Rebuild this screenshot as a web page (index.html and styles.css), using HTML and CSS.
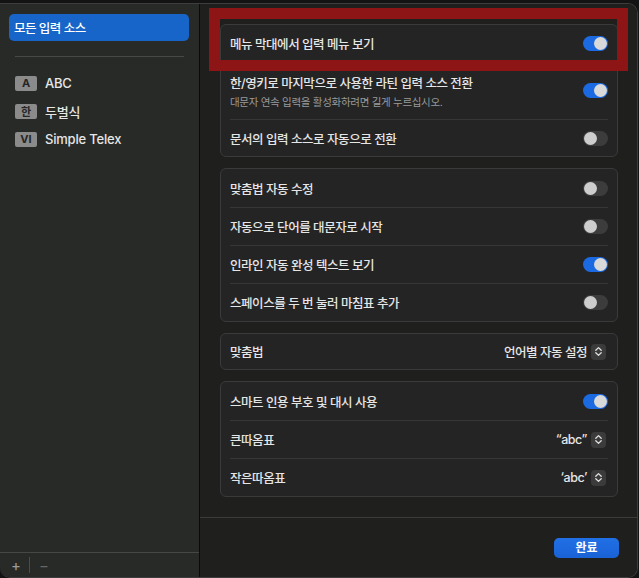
FILE: index.html
```html
<!DOCTYPE html>
<html lang="ko">
  <head>
    <meta charset="utf-8">
    <title>입력 소스</title>
    <link rel="stylesheet" href="styles.css">
  </head>
  <body>
    <div class="window">
      <div class="sidebar">
        <div class="source-list">
          <div class="source selected">모든 입력 소스</div>
          <div class="divider"></div>
          <div class="source"><span class="badge">A</span>ABC</div>
          <div class="source"><span class="badge">한</span>두벌식</div>
          <div class="source"><span class="badge">VI</span>Simple Telex</div>
        </div>
        <div class="list-tools">
          <span class="tool">+</span>
          <span class="tool-sep"></span>
          <span class="tool dim">−</span>
        </div>
      </div>

      <div class="pane">
        <div class="settings">
          <div class="group">
            <div class="row first">
              <span class="label">메뉴 막대에서 입력 메뉴 보기</span>
              <span class="switch on"></span>
            </div>
            <div class="row tall">
              <div>
                <div class="label">한/영키로 마지막으로 사용한 라틴 입력 소스 전환</div>
                <div class="hint">대문자 연속 입력을 활성화하려면 길게 누르십시오.</div>
              </div>
              <span class="switch on"></span>
            </div>
            <div class="row last">
              <span class="label">문서의 입력 소스로 자동으로 전환</span>
              <span class="switch"></span>
            </div>
          </div>

          <div class="group">
            <div class="row">
              <span class="label">맞춤법 자동 수정</span>
              <span class="switch"></span>
            </div>
            <div class="row">
              <span class="label">자동으로 단어를 대문자로 시작</span>
              <span class="switch"></span>
            </div>
            <div class="row">
              <span class="label">인라인 자동 완성 텍스트 보기</span>
              <span class="switch on"></span>
            </div>
            <div class="row">
              <span class="label">스페이스를 두 번 눌러 마침표 추가</span>
              <span class="switch"></span>
            </div>
          </div>

          <div class="group">
            <div class="row single">
              <span class="label">맞춤법</span>
              <span class="popup">언어별 자동 설정<span class="stepper"><svg width="15" height="15" viewBox="0 0 15 15"><path d="M4.8 6.2 L7.5 3.6 L10.2 6.2 M4.8 8.8 L7.5 11.4 L10.2 8.8" fill="none" stroke="#e2e2e2" stroke-width="1.3" stroke-linecap="round" stroke-linejoin="round"/></svg></span></span>
            </div>
          </div>

          <div class="group">
            <div class="row">
              <span class="label">스마트 인용 부호 및 대시 사용</span>
              <span class="switch on"></span>
            </div>
            <div class="row">
              <span class="label">큰따옴표</span>
              <span class="popup">“abc”<span class="stepper"><svg width="15" height="15" viewBox="0 0 15 15"><path d="M4.8 6.2 L7.5 3.6 L10.2 6.2 M4.8 8.8 L7.5 11.4 L10.2 8.8" fill="none" stroke="#e2e2e2" stroke-width="1.3" stroke-linecap="round" stroke-linejoin="round"/></svg></span></span>
            </div>
            <div class="row">
              <span class="label">작은따옴표</span>
              <span class="popup">‘abc’<span class="stepper"><svg width="15" height="15" viewBox="0 0 15 15"><path d="M4.8 6.2 L7.5 3.6 L10.2 6.2 M4.8 8.8 L7.5 11.4 L10.2 8.8" fill="none" stroke="#e2e2e2" stroke-width="1.3" stroke-linecap="round" stroke-linejoin="round"/></svg></span></span>
            </div>
          </div>
        </div>

        <div class="footer">
          <span class="done">완료</span>
        </div>

        <!-- 강조 표시 -->
        <div class="highlight"></div>
      </div>
    </div>
  </body>
</html>
```

FILE: styles.css
```css
* {
  box-sizing: border-box;
}

body {
  margin: 0;
  background-color: #131313;
  font-family: "Inter", "Noto Sans CJK KR", sans-serif;
  color: #e6e6e6;
  -webkit-user-select: none;
  user-select: none;
}

.window {
  display: flex;
  width: 638px;
  height: 575px;
  margin-top: 3px;
  border: 1px solid #3d3d3d;
  border-left: none;
  border-radius: 0 10px 10px 10px;
  overflow: hidden;
}

/* sidebar */
.sidebar {
  display: flex;
  flex-direction: column;
  width: 200px;
  background-color: #282a28;
  border-right: 1px solid #0b0b0b;
}
.source-list {
  flex: 1;
  padding: 10px 10px 0 9px;
}
.source {
  display: flex;
  align-items: center;
  height: 28px;
  padding-left: 6px;
  font-size: 13px;
  font-weight: 500;
  letter-spacing: -0.2px;
}
.source.selected {
  height: 27px;
  padding-left: 5px;
  background-color: #1765c9;
  border-radius: 5px;
  color: #fff;
  font-size: 12.5px;
  letter-spacing: -0.5px;
}
.divider {
  height: 1px;
  margin: 15px 5px 12px 6px;
  background-color: #474847;
}
.badge {
  display: inline-flex;
  justify-content: center;
  align-items: center;
  width: 22px;
  height: 15px;
  margin-right: 8px;
  background-color: #8b8b8b;
  border-radius: 2px;
  color: #262626;
  font-size: 11px;
  font-weight: 700;
  letter-spacing: 0;
}
.list-tools {
  display: flex;
  align-items: center;
  height: 25px;
  padding-left: 11px;
  border-top: 1px solid #464746;
  color: #9c9c9c;
  font-size: 15px;
}
.tool {
  width: 10px;
  text-align: center;
}
.tool.dim {
  color: #666;
}
.tool-sep {
  width: 1px;
  height: 16px;
  margin: 0 9px 0 8px;
  background-color: #4a4b4a;
}

/* pane */
.pane {
  position: relative;
  display: flex;
  flex-direction: column;
  flex: 1;
  background-color: #1f201e;
}
.settings {
  display: flex;
  flex-direction: column;
  gap: 11px;
  flex: 1;
  padding: 20px 19px 0 20px;
}
.group {
  background-color: #242424;
  border: 1px solid #3a3a3a;
  border-radius: 6px;
}
.row {
  display: flex;
  justify-content: space-between;
  align-items: center;
  height: 38px;
  margin: 0 9px;
}
.row + .row {
  border-top: 1px solid #363636;
}
.row.first {
  height: 36px;
}
.row.tall {
  height: 58px;
}
.row.last {
  height: 37px;
}
.row.single {
  height: 35px;
}
.label {
  font-size: 12.5px;
  font-weight: 500;
  letter-spacing: -0.45px;
}
.hint {
  margin-top: 2px;
  color: #9a9a9a;
  font-size: 10.5px;
  letter-spacing: -0.3px;
}

.switch {
  position: relative;
  flex-shrink: 0;
  width: 25px;
  height: 15px;
  background-color: #3c3c3c;
  border-radius: 8px;
}
.switch::after {
  content: "";
  position: absolute;
  top: 1px;
  left: 1px;
  width: 13px;
  height: 13px;
  background-color: #cdcdcd;
  border-radius: 50%;
}
.switch.on {
  background-color: #1c6ae2;
}
.switch.on::after {
  left: 11px;
  background-color: #d9d9d9;
}

.popup {
  display: flex;
  align-items: center;
  gap: 4px;
  margin-right: 2px;
  font-size: 12.5px;
  font-weight: 500;
  letter-spacing: -0.45px;
}
.stepper {
  display: flex;
  width: 15px;
  height: 16px;
  padding-top: 0.5px;
  background-color: #3b3b3b;
  border-radius: 4px;
}

.footer {
  display: flex;
  justify-content: flex-end;
  align-items: flex-start;
  height: 60px;
  padding: 20px 18px 0 0;
  border-top: 1px solid #3a3b3a;
}
.done {
  width: 65px;
  height: 20px;
  line-height: 20px;
  text-align: center;
  background: linear-gradient(#2170e6, #1a62d6);
  border-radius: 5px;
  color: #fff;
  font-size: 12px;
  font-weight: 700;
}

.highlight {
  position: absolute;
  top: 4px;
  left: 9px;
  width: 419px;
  height: 63px;
  border: 11px solid #8e1515;
}
```
